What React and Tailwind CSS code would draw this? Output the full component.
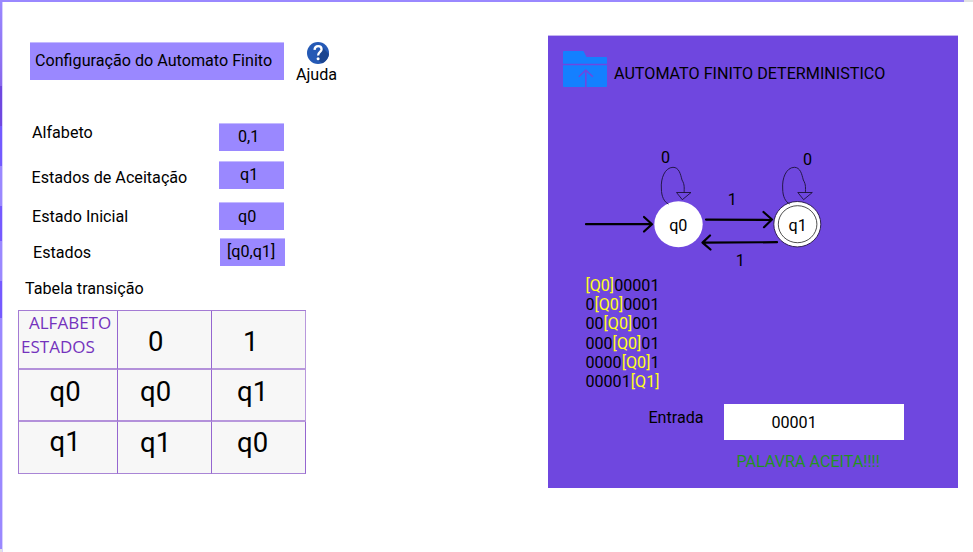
import React from "react";

const railSegments = [
  "h-[84px] bg-linear-to-b from-[#9a88ff] to-[#8867ec]",
  "h-[40px] bg-[#6f47df]",
  "h-[40px] bg-[#735aff]",
  "h-[40px] bg-[#9a88ff]",
  "h-[35px] bg-[#7559ff]",
  "h-[40px] bg-[#9a88ff]",
  "h-[37px] bg-[#7559ff]",
  "h-[231px] bg-[#9a88ff]",
  "h-[3px] bg-[#e2e2e2]",
];

const fields = [
  { label: "Alfabeto", value: "0,1", row: "h-[38px]", labelClass: "pl-[32px] pt-px", textClass: "pl-[19px] pt-[3px]" },
  { label: "Estados de Aceitação", value: "q1", row: "h-[41px]", labelClass: "pl-[31.5px] pt-[8px]", textClass: "pl-[21px] pt-[3px]" },
  { label: "Estado Inicial", value: "q0", row: "h-[36px]", labelClass: "pl-[32px] pt-[6px]", textClass: "pl-[19px] pt-[4px]" },
  { label: "Estados", value: "[q0,q1]", row: "h-[42px]", labelClass: "pl-[33px] pt-[6px]", textClass: "pl-[7px] pt-[3px]", box: "ml-px" },
];

const steps = [
  ["", "[Q0]", "00001"],
  ["0", "[Q0]", "0001"],
  ["00", "[Q0]", "001"],
  ["000", "[Q0]", "01"],
  ["0000", "[Q0]", "1"],
  ["00001", "[Q1]", ""],
];

function HelpIcon() {
  return (
    <svg className="relative left-px" width="22" height="22" viewBox="0 0 22 22">
      <defs>
        <clipPath id="disc"><circle cx="11" cy="11" r="11" /></clipPath>
      </defs>
      <circle cx="11" cy="11" r="11" fill="#2459b5" />
      <path d="M14.5 4.5L24 14V24H18L10 17Z" fill="#1b4590" clipPath="url(#disc)" />
      <path d="M7.5 7.8C7.7 5.2 9.1 4.1 11.1 4.1C13.2 4.1 14.6 5.3 14.6 7.2C14.6 9.9 11.1 9.8 11.1 13.4" fill="none" stroke="#fff" strokeWidth="2.3" />
      <circle cx="11.1" cy="16.8" r="1.5" fill="#fff" />
    </svg>
  );
}

function FolderIcon() {
  return (
    <svg width="44" height="36" viewBox="0 0 44 36">
      <path d="M1 0H20.5L23.5 6H43Q44 6 44 7V12.8H0V1Q0 0 1 0Z" fill="#1480ff" />
      <path d="M0 14.3H44V35Q44 36 43 36H1Q0 36 0 35Z" fill="#1480ff" />
      <path d="M22.8 36V19.5M15.8 25.8L22.8 19L29.8 25.8" fill="none" stroke="#6f47df" strokeWidth="1.6" />
    </svg>
  );
}

function Loop({ x }) {
  return (
    <g transform={`translate(${x} 0)`} fill="none" stroke="#1c1238" strokeWidth="0.9">
      <path d="M668.5 204C664 202 661.4 196 661.4 189C660.5 178 665 167.5 673 167.3C679 167.3 680.5 174 682 180C685 185 684 188 684.2 193" />
      <path d="M676.5 192.5H691L682.3 199.7Z" />
    </g>
  );
}

function Diagram() {
  return (
    <svg width="410" height="152" viewBox="548 122 410 152" fontFamily="Roboto, sans-serif" fontSize="16.15" fill="#000">
      <g fill="none" stroke="#000" strokeWidth="2.2" strokeLinecap="round" strokeLinejoin="round">
        <path d="M586 224.2H651M644 217L652 224.2L644 231.5" />
        <path d="M706 219.6L771 220M763.5 212L772 219.5L764 227.2" />
        <path d="M777 242.2L703 242.6M710 235.5L702.5 242.6L710.5 249.5" />
      </g>
      <ellipse cx="678.5" cy="224.2" rx="24.2" ry="23" fill="#fff" />
      <ellipse cx="797.3" cy="224.2" rx="23.5" ry="22.7" fill="#fff" stroke="#211341" strokeWidth="0.9" />
      <ellipse cx="797.6" cy="224.2" rx="19.3" ry="18.5" fill="#fff" stroke="#222" strokeWidth="0.8" />
      <Loop x={0} />
      <Loop x={121.3} />
      <text x="661" y="163.4">0</text>
      <text x="803" y="165.4">0</text>
      <text x="727.8" y="205">1</text>
      <text x="735.8" y="266">1</text>
      <text x="669.2" y="231">q0</text>
      <text x="788.5" y="231">q1</text>
    </svg>
  );
}

const cell = "border-r border-b-2 border-r-[#9566d0] border-b-[#b391da] text-[27.5px] leading-[32px]";
const lastCell = "border-r border-b-2 border-[#b898dc] text-[27.5px] leading-[32px]";
const bottomCell = "border-r border-b border-r-[#9566d0] border-b-[#a985d6] text-[27.5px] leading-[32px]";

function TransitionTable() {
  return (
    <div className="ml-[18px] mt-[11px] grid h-[164px] w-[288px] grid-cols-[99px_94px_94px] grid-rows-[59px_52px_52px] border-t border-l border-[#a47bd4] bg-[#f7f7f7]">
      <div className="border-r border-b-2 border-r-[#9566d0] border-b-[#b391da] font-['Open_Sans',sans-serif] text-[17px] leading-[24px] text-[#7432bd]">
        <div className="pl-[10px]">ALFABETO</div>
        <div className="pl-[2px]">ESTADOS</div>
      </div>
      <div className={`${cell} pl-[30px] pt-[15px]`}>0</div>
      <div className={`${lastCell} pl-[31px] pt-[15px]`}>1</div>
      <div className={`${cell} pl-[30.5px] pt-[6px]`}>q0</div>
      <div className={`${cell} pl-[22px] pt-[6px]`}>q0</div>
      <div className={`${lastCell} pl-[25px] pt-[6px]`}>q1</div>
      <div className={`${bottomCell} pl-[30.5px] pt-[4px]`}>q1</div>
      <div className={`${bottomCell} pl-[22px] pt-[5px]`}>q1</div>
      <div className={`${bottomCell} pl-[25px] pt-[5px]`}>q0</div>
    </div>
  );
}

export default function App() {
  return (
    <div className="flex h-[552px] w-[973px] flex-col overflow-hidden bg-white font-['Roboto',sans-serif] text-[16.15px] leading-[20px] text-black">
      <div className="flex h-[2px]">
        <div className="w-[964px] bg-[#9a88ff]" />
        <div className="flex-1 bg-[#e2e2e2]" />
      </div>
      <div className="flex flex-1">
        <div className="flex w-[3px] shrink-0 flex-col border-r border-[#d7d0ff]">
          {railSegments.map((s, i) => <div key={i} className={s} />)}
        </div>
        <main className="-ml-[3px] w-[548px] shrink-0">
          <div className="flex pt-[40px]">
            <div className="ml-[30px] h-[38px] w-[254px] whitespace-nowrap border-t border-[#c4baff] bg-[#9a88ff] pl-[5px] pt-[8px]">Configuração do Automato Finito</div>
            <div className="ml-[11px] flex w-[43px] flex-col items-center">
              <HelpIcon />
              <span className="mt-px">Ajuda</span>
            </div>
          </div>
          <div className="mt-[37px]">
            {fields.map((f) => (
              <div key={f.label} className={`flex ${f.row}`}>
                <div className={`w-[219px] ${f.labelClass}`}>{f.label}</div>
                <div className={`mt-px h-[28px] w-[65px] border-t border-[#c4baff] bg-[#9a88ff] ${f.textClass} ${f.box || ""}`}>{f.value}</div>
              </div>
            ))}
          </div>
          <div className="pl-[25px]">Tabela transição</div>
          <TransitionTable />
        </main>
        <section className="mt-[33px] h-[453px] w-[410px] shrink-0 border-t border-[#c3b4f0] bg-[#6f47df]">
          <div className="flex pl-[15px] pt-[15px]">
            <FolderIcon />
            <h1 className="ml-[7px] mt-[13px]">AUTOMATO FINITO DETERMINISTICO</h1>
          </div>
          <div className="mt-[35px]"><Diagram /></div>
          <div className="ml-[37.4px] mt-[2px] leading-[19.2px]">
            {steps.map(([before, state, after], i) => (
              <div key={i}>{before}<span className="text-[#ffff1a]">{state}</span>{after}</div>
            ))}
          </div>
          <div className="mt-[13px] flex">
            <span className="ml-[100.4px] mt-[4px] w-[75.6px]">Entrada</span>
            <div className="h-[36px] w-[180px] bg-white pl-[47.4px] pt-[9px]">00001</div>
          </div>
          <div className="ml-[188.4px] mt-[12px] text-[#24931f]">PALAVRA ACEITA!!!!</div>
        </section>
      </div>
    </div>
  );
}
